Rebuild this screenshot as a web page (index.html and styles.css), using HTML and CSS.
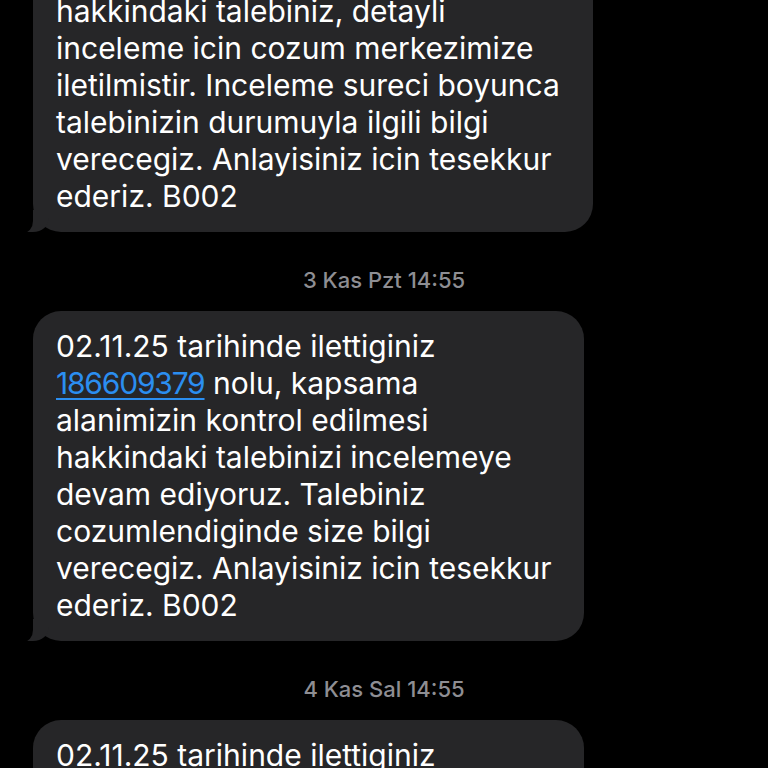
FILE: index.html
```html
<!DOCTYPE html>
<html lang="tr">
<head>
<meta charset="utf-8">
<link rel="stylesheet" href="styles.css">
</head>
<body>
<div class="thread">
  <div class="msg">
    <div class="bubble">02.11.25 tarihinde ilettiginiz<br><span class="link">186609379</span> nolu, kapsama<br>alanimizin kontrol edilmesi<br>hakkindaki talebiniz, detayli<br>inceleme icin cozum merkezimize<br>iletilmistir. Inceleme sureci boyunca<br>talebinizin durumuyla ilgili bilgi<br>verecegiz. Anlayisiniz icin tesekkur<br>ederiz. B002</div>
  </div>
  <div class="stamp">3 Kas Pzt 14:55</div>
  <div class="msg">
    <div class="bubble">02.11.25 tarihinde ilettiginiz<br><span class="link">186609379</span> nolu, kapsama<br>alanimizin kontrol edilmesi<br>hakkindaki talebinizi incelemeye<br>devam ediyoruz. Talebiniz<br>cozumlendiginde size bilgi<br>verecegiz. Anlayisiniz icin tesekkur<br>ederiz. B002</div>
  </div>
  <div class="stamp">4 Kas Sal 14:55</div>
  <div class="msg">
    <div class="bubble">02.11.25 tarihinde ilettiginiz<br><span class="link">186609379</span> nolu, kapsama<br>alanimizin kontrol edilmesi<br>hakkindaki talebinizi incelemeye<br>devam ediyoruz. Talebiniz<br>cozumlendiginde size bilgi<br>verecegiz. Anlayisiniz icin tesekkur<br>ederiz. B002</div>
  </div>
</div>
</body>
</html>
```
FILE: styles.css
```css
html, body {
  margin: 0;
  padding: 0;
  background: #000;
  height: 100%;
  overflow: hidden;
}
body {
  font-family: Inter, "Noto Sans", sans-serif;
  color: #fff;
}
.thread {
  margin-top: -135px;
  padding-left: 33px;
  display: flex;
  flex-direction: column;
}
.msg {
  display: flex;
}
.bubble {
  position: relative;
  background: #262628;
  border-radius: 28px;
  padding: 17px 33px 17px 23px;
  font-size: 30px;
  line-height: 37px;
  letter-spacing: 0;
  white-space: nowrap;
}
.bubble::before {
  content: "";
  position: absolute;
  left: -10px;
  bottom: 0;
  width: 26px;
  height: 22px;
  background: #262628;
  border-bottom-right-radius: 16px 14px;
}
.bubble::after {
  content: "";
  position: absolute;
  left: -16px;
  bottom: -1px;
  width: 16px;
  height: 24px;
  background: #000;
  border-bottom-right-radius: 10px 12px;
}
.link {
  color: #2b8ef0;
  letter-spacing: -1.2px;
  text-decoration: underline;
  text-decoration-thickness: 2px;
  text-underline-offset: 4px;
}
.stamp {
  margin: 36px 0 19px -33px;
  text-align: center;
  font-size: 22px;
  line-height: 24px;
  font-weight: 500;
  color: #8e8e93;
}
```
